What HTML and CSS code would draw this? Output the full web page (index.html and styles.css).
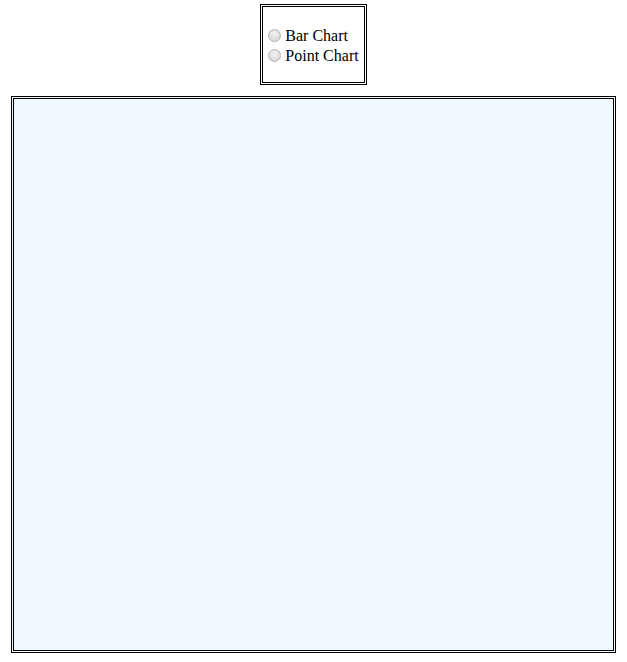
FILE: index.html
```html
<!DOCTYPE html>
<html lang="en">
<head>
  <meta charset="UTF-8" />
  <title>Charts</title>
  <link rel="stylesheet" href="styles.css">
</head>
<body>
  <form class="chart-type">
    <label><input type="radio" name="type" value="bar"> Bar Chart</label>
    <label><input type="radio" name="type" value="point"> Point Chart</label>
  </form>
  <div class="chart" id="chart"></div>
</body>
</html>
```
FILE: styles.css
```css
body { margin: 0; font-family: "Liberation Serif", "Times New Roman", serif; font-size: 16px; color: #000; background: #fff; }
.chart-type {
  width: max-content;
  margin: 4px auto 0;
  border: 3px double #000;
  padding: 19px 5px 16px 5px;
}
.chart-type label { display: block; line-height: 20px; }
.chart-type input {
  appearance: none;
  -webkit-appearance: none;
  width: 13px; height: 13px;
  margin: 0;
  vertical-align: -1px;
  border: 1px solid #b4b4b4;
  border-radius: 50%;
  background: radial-gradient(circle at 50% 35%, #f4f4f4, #cfcfcf);
  box-sizing: border-box;
}
.chart {
  margin: 11px 11px 0;
  height: 551px;
  border: 3px double #000;
  background: #f0f8ff;
}
```
